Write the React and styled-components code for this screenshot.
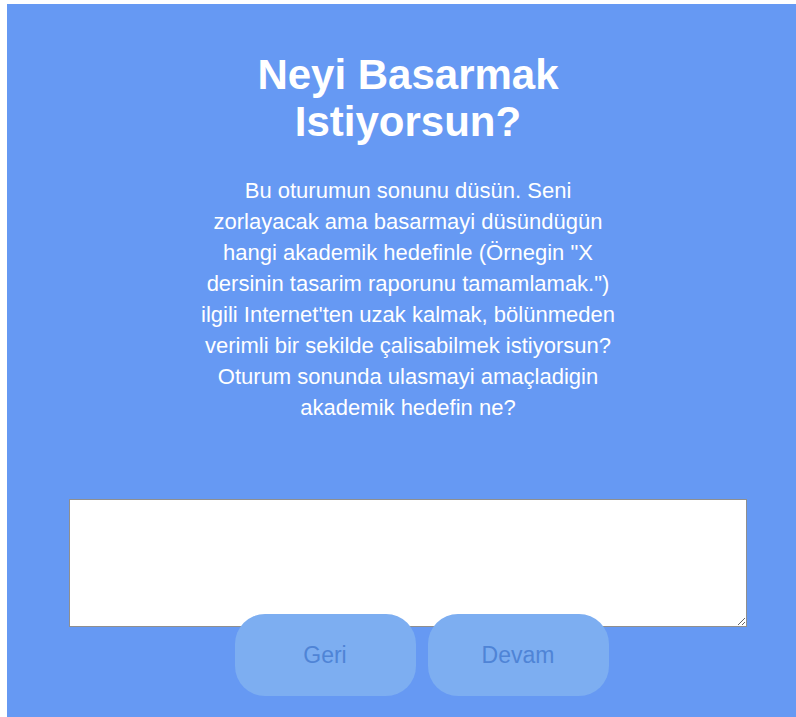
import styled, { createGlobalStyle } from 'styled-components';

const GlobalStyle = createGlobalStyle`
    html, body {
        margin: 0;
        padding: 0;
        background: #fff;
        overflow: hidden;
    }
    body {
        padding: 4px 0 0 7px;
        font-family: "Liberation Sans", Arial, Helvetica, sans-serif;
    }
`;

const Panel = styled.div`
    width: 802px;
    height: 713px;
    background: #6699f3;
    padding-top: 47px;
    box-sizing: border-box;
    display: flex;
    flex-direction: column;
    align-items: center;
`;

const Title = styled.h1`
    margin: 0;
    font-size: 42px;
    line-height: 47px;
    font-weight: 700;
    color: #fff;
    text-align: center;
`;

const Prompt = styled.p`
    margin: 30px 0 0;
    font-size: 22px;
    line-height: 31px;
    color: #fff;
    text-align: center;
    white-space: nowrap;
`;

const Answer = styled.textarea`
    margin-top: 76px;
    width: 678px;
    height: 128px;
    flex-shrink: 0;
    box-sizing: border-box;
    border: 1px solid #8f8f8f;
    background: #fff;
    font-family: inherit;
    font-size: 16px;
    padding: 4px;
    resize: both;
    outline: none;
`;

const Actions = styled.div`
    align-self: stretch;
    display: flex;
    justify-content: center;
    gap: 12px;
    padding-left: 27px;
    margin-top: -13px;
`;

const NavButton = styled.button`
    width: 181px;
    height: 82px;
    flex-shrink: 0;
    border: none;
    border-radius: 30px;
    background: #7daef1;
    color: #4f84d6;
    font-family: inherit;
    font-size: 23px;
    cursor: pointer;
`;

export default function App() {
    return (
        <>
            <GlobalStyle />
            <Panel>
                <Title>
                    Neyi Basarmak
                    <br />
                    Istiyorsun?
                </Title>
                <Prompt>
                    Bu oturumun sonunu düsün. Seni
                    <br />
                    zorlayacak ama basarmayi düsündügün
                    <br />
                    hangi akademik hedefinle (Örnegin "X
                    <br />
                    dersinin tasarim raporunu tamamlamak.")
                    <br />
                    ilgili Internet'ten uzak kalmak, bölünmeden
                    <br />
                    verimli bir sekilde çalisabilmek istiyorsun?
                    <br />
                    Oturum sonunda ulasmayi amaçladigin
                    <br />
                    akademik hedefin ne?
                </Prompt>
                <Answer />
                <Actions>
                    <NavButton>Geri</NavButton>
                    <NavButton>Devam</NavButton>
                </Actions>
            </Panel>
        </>
    );
}
